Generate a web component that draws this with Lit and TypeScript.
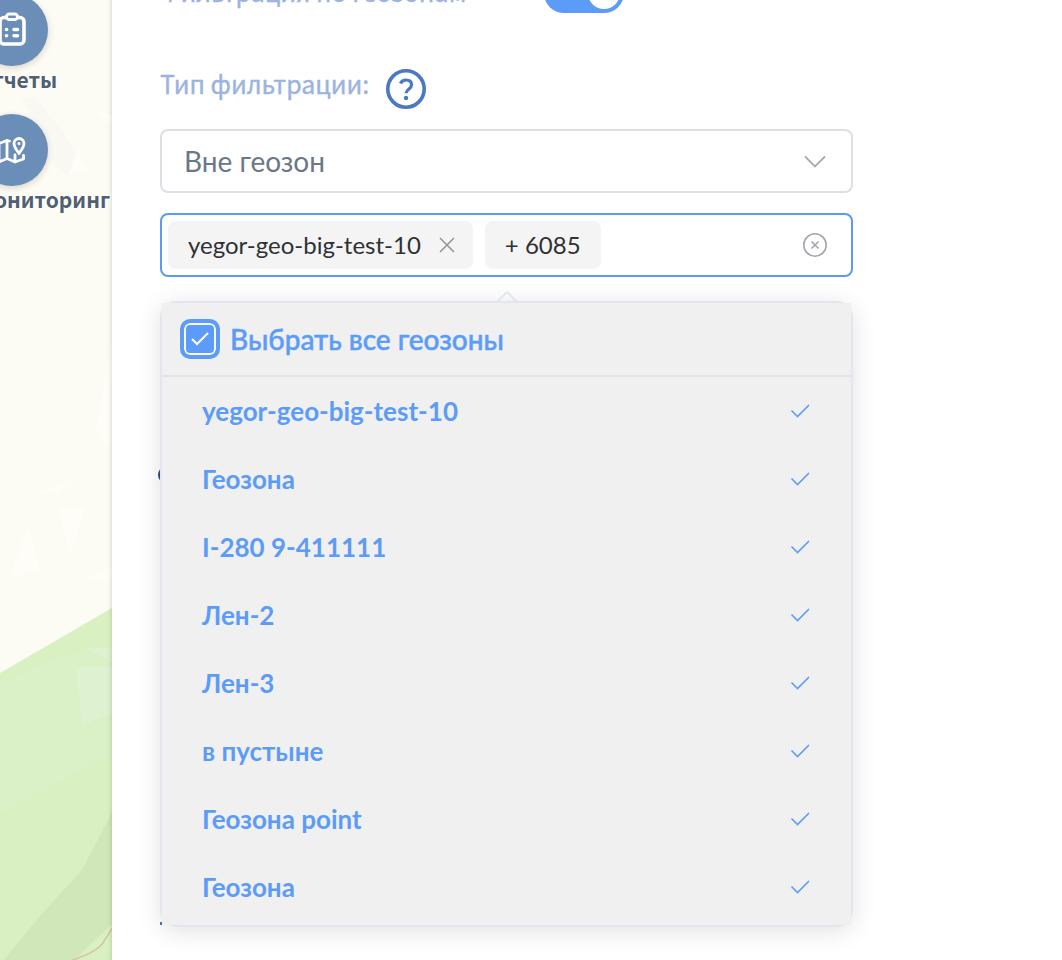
import { LitElement, html, css } from "lit";
import { customElement, state } from "lit/decorators.js";

@customElement("map-sidebar")
class MapSidebar extends LitElement {
  static styles = css`
    :host {
      display: block;
      position: relative;
      overflow: hidden;
      background: #fcfbf4;
    }
    .map {
      position: absolute;
      inset: 0;
      width: 100%;
      height: 100%;
    }
    .edge {
      position: absolute;
      inset: 0;
      box-shadow: inset -4px 0 4px -3px rgba(0, 0, 0, 0.14);
    }
    nav {
      position: relative;
      display: flex;
      flex-direction: column;
      gap: 22px;
      margin: -6px 0 0 -24px;
    }
    a {
      display: flex;
      flex-direction: column;
      align-items: flex-start;
      color: #505f72;
      font: 700 21px/26px "Noto Sans CJK SC", "Noto Sans", sans-serif;
      white-space: nowrap;
      text-decoration: none;
    }
    .disc {
      width: 72px;
      height: 72px;
      border-radius: 50%;
      background: #6a8eb7;
      box-shadow: 0 2px 6px rgba(60, 50, 30, 0.2);
    }
    .disc svg {
      display: block;
    }
    .label {
      text-shadow: 0 0 4px #fff, 0 0 4px #fff;
    }
  `;

  render() {
    return html`
      <svg class="map" viewBox="0 0 112 960" preserveAspectRatio="xMinYMin slice" aria-hidden="true">
        <path d="M22 100L70 180l-8-50-28-34zM50 160l18 16 8-22-14-24z" fill="#f9f8f2" />
        <path d="M67 176l10-23 12 17zM95 110l17 15v-10zM96 430l8-44 8-40v96l-7 2z" fill="#fefdf8" />
        <path d="M9 577l20-54 11 49zM35 493l39-12-16 12zM59 508h26l-15 50zM86 578l26-11v15z" fill="#fefdf8" />
        <path d="M0 673l112-65v352H0z" fill="#d9f1c2" />
        <path d="M0 684l60-28 52-10v106L0 814z" fill="#dbf0c8" opacity=".6" />
        <path d="M76 667h36v47l-30 11zM86 648h26v14z" fill="#def1d0" />
        <path d="M112 812L82 870 40 916 4 960h70l38-36z" fill="#d0e8b9" />
        <path d="M70 961q30-10 34-20l9-14" fill="none" stroke="#cfc6a0" stroke-width="1.5" />
      </svg>
      <div class="edge"></div>
      <nav>
        <a href="#reports">
          <span class="disc">
            <svg width="72" height="72" viewBox="0 0 72 72" fill="none" stroke="#fff" stroke-width="3.600" stroke-linejoin="round" stroke-linecap="round">
              <path d="M30 23.500h-2a4 4 0 0 0-4 4V46a4 4 0 0 0 4 4h16a4 4 0 0 0 4-4V27.500a4 4 0 0 0-4-4h-2" />
              <rect x="30.500" y="20" width="11" height="5.500" rx="2.750" stroke-width="3" />
              <path d="M30.500 35.500h.1M38 35.500h3.500M30.500 41.800h.1M38 41.800h3.500" />
            </svg>
          </span>
          <span class="label">Отчеты</span>
        </a>
        <a href="#monitoring">
          <span class="disc">
            <svg width="72" height="72" viewBox="0 0 72 72" fill="none" stroke="#fff" stroke-width="2.800" stroke-linejoin="round" stroke-linecap="round">
              <path d="M33.500 27L31 26.500l-8 3V48l8-3.500 8 3.500 8.500-3V41.500M31 26.500v18M39 41v7" />
              <path d="M43 39.500c-2.800-4-5-6.600-5-10a5 5 0 0 1 10 0c0 3.400-2.200 6-5 10z" />
              <circle cx="43" cy="29.500" r=".8" stroke-width="1.500" />
            </svg>
          </span>
          <span class="label">Мониторинг</span>
        </a>
      </nav>
    `;
  }
}

@customElement("zone-picker")
class ZonePicker extends LitElement {
  static styles = css`
    :host {
      display: block;
      position: relative;
      font: 400 26px/32px Lato, sans-serif;
    }
    * {
      box-sizing: border-box;
    }
    button {
      border: 0;
      padding: 0;
      background: none;
      font: inherit;
      color: inherit;
      cursor: pointer;
    }
    svg {
      display: block;
      flex: none;
    }
    .field {
      display: flex;
      align-items: center;
      gap: 12px;
      height: 64px;
      padding: 0 22px 0 6px;
      border: 2px solid #5c9af2;
      border-radius: 8px;
      background: #fff;
    }
    .chip {
      display: flex;
      align-items: center;
      gap: 16px;
      height: 48px;
      padding: 0 16px 0 20px;
      border-radius: 8px;
      background: #f4f4f5;
      color: #303133;
      font-size: 24px;
      white-space: nowrap;
    }
    .chip.more {
      padding-right: 20px;
    }
    .search {
      flex: 1;
      min-width: 0;
      border: 0;
      outline: 0;
      background: none;
      font: inherit;
    }
    .menu {
      position: absolute;
      top: 88px;
      left: 0;
      right: 0;
      border: 2px solid #e4e6ee;
      border-radius: 16px;
      box-shadow: 0 4px 24px rgba(0, 0, 0, 0.12);
    }
    .arrow {
      position: absolute;
      top: -12px;
      left: 50%;
      margin-left: -12px;
    }
    .body {
      padding-bottom: 4px;
      background: #f0f0f0;
      color: #5c9cf8;
    }
    .all {
      display: flex;
      align-items: center;
      gap: 10px;
      height: 74px;
      padding: 0 18px;
      border-bottom: 2px solid #e2e4ea;
      font-size: 28px;
      font-weight: 500;
      -webkit-text-stroke: 0.5px #5c9cf8;
    }
    .tick {
      position: relative;
      display: grid;
      place-items: center;
      width: 40px;
      height: 40px;
    }
    .tick input {
      appearance: none;
      grid-area: 1 / 1;
      width: 40px;
      height: 40px;
      margin: 0;
      border: 4px solid #5c9cf8;
      border-radius: 10px;
      background: #5c9cf8;
      box-shadow: inset 0 0 0 2px #f6f9ff;
    }
    .tick svg {
      grid-area: 1 / 1;
      z-index: 1;
      pointer-events: none;
    }
    .list {
      margin: 0;
      padding: 0;
      list-style: none;
    }
    .option {
      display: flex;
      align-items: center;
      justify-content: space-between;
      height: 68px;
      padding: 0 40px;
      font-weight: 700;
    }
  `;

  @state() zones = [
    "yegor-geo-big-test-10",
    "Геозона",
    "I-280 9-411111",
    "Лен-2",
    "Лен-3",
    "в пустыне",
    "Геозона point",
    "Геозона",
  ];

  render() {
    return html`
      <div class="field">
        <span class="chip">
          ${this.zones[0]}
          <button type="button" aria-label="Удалить">
            <svg width="20" height="20" viewBox="0 0 20 20" stroke="#909399" stroke-width="1.500">
              <path d="M3 3l14 14M17 3L3 17" />
            </svg>
          </button>
        </span>
        <span class="chip more">+ 6085</span>
        <input class="search" type="text" aria-label="Геозоны" />
        <button type="button" aria-label="Очистить">
          <svg width="28" height="28" viewBox="0 0 28 28" fill="none" stroke="#a3a6ab" stroke-width="1.600">
            <circle cx="14" cy="14" r="11.200" />
            <path d="M10.500 10.500l7 7M17.500 10.500l-7 7" />
          </svg>
        </button>
      </div>
      <div class="menu">
        <svg class="arrow" width="24" height="12" viewBox="0 0 24 12" fill="none" stroke="#e4e6ee" stroke-width="2">
          <path d="M1 12L11 2q1-1 2 0l10 10" />
        </svg>
        <div class="body">
          <label class="all">
            <span class="tick">
              <input type="checkbox" checked />
              <svg width="20" height="16" viewBox="0 0 20 16" fill="none" stroke="#fff" stroke-width="2">
                <path d="M2 8l5 5L18 2" />
              </svg>
            </span>
            Выбрать все геозоны
          </label>
          <ul class="list" role="listbox" aria-multiselectable="true" aria-label="Геозоны">
            ${this.zones.map(
              (zone) => html`
                <li class="option" role="option" aria-selected="true">
                  ${zone}
                  <svg width="24" height="20" viewBox="0 0 24 20" fill="none" stroke="#5c9cf8" stroke-width="1.600">
                    <path d="M4.500 9.500l6 6L22 4" />
                  </svg>
                </li>
              `
            )}
          </ul>
        </div>
      </div>
    `;
  }
}

@customElement("app-root")
class AppRoot extends LitElement {
  static styles = css`
    :host {
      display: grid;
      grid-template-columns: 112px minmax(0, 1fr);
      height: 100vh;
      overflow: hidden;
      background: #fff;
    }
    * {
      box-sizing: border-box;
    }
    main {
      display: flex;
      flex-direction: column;
      overflow: hidden;
      padding: 0 209px 0 48px;
      color: #9bb3e0;
      font: 400 25px/36px "Noto Sans CJK SC", "Noto Sans", sans-serif;
    }
    label {
      -webkit-text-stroke: 0.4px #9bb3e0;
    }
    .toggle-row {
      display: grid;
      grid-template-columns: 384px auto;
      justify-content: start;
      margin-top: -27px;
    }
    .switch {
      appearance: none;
      width: 80px;
      height: 40px;
      margin: 0;
      border-radius: 20px;
      background: radial-gradient(circle at 60px 20px, #fff 15.500px, #5c9cf8 16.500px);
    }
    .type-row {
      display: flex;
      gap: 17px;
      margin: 52px 0 20px;
    }
    .help {
      display: block;
      margin-top: 4px;
      border: 0;
      padding: 0;
      background: none;
    }
    .help svg {
      display: block;
    }
    .select {
      display: grid;
      align-items: center;
      margin-bottom: 20px;
    }
    .select select {
      appearance: none;
      grid-area: 1 / 1;
      width: 100%;
      height: 64px;
      padding: 0 22px;
      border: 2px solid #dcdfe4;
      border-radius: 8px;
      background: #fff;
      color: #6b7785;
      font: 400 28px/40px Lato, sans-serif;
    }
    .select svg {
      grid-area: 1 / 1;
      justify-self: end;
      margin-right: 26px;
      pointer-events: none;
    }
    .below {
      display: flex;
      flex-direction: column;
      gap: 439px;
      margin: 190px 0 0 -2px;
    }
    .bullet {
      width: 16px;
      height: 16px;
      border-radius: 50%;
      background: #2d4a7c;
    }
    .line {
      width: 3px;
      height: 3px;
      margin-left: 2px;
      background: #4d76b8;
    }
    zone-picker {
      z-index: 1;
    }
  `;

  render() {
    return html`
      <map-sidebar></map-sidebar>
      <main>
        <div class="toggle-row">
          <label for="by-zone">Фильтрация по геозонам</label>
          <input id="by-zone" class="switch" type="checkbox" role="switch" checked />
        </div>
        <div class="type-row">
          <label for="type">Тип фильтрации:</label>
          <button class="help" type="button" aria-label="Справка">
            <svg width="40" height="40" viewBox="0 0 40 40" fill="none" stroke="#4a78c2" stroke-width="3.600">
              <circle cx="20" cy="20" r="18.200" />
              <path d="M14.500 14.500q1.500-3.500 5.500-3.500 5.500 0 5.500 4.700 0 2.300-2.500 4.300-2.900 2.200-2.900 4.300" stroke-width="3.200" />
              <circle cx="20" cy="29" r="2.200" fill="#4a78c2" stroke="none" />
            </svg>
          </button>
        </div>
        <div class="select">
          <select id="type">
            <option>Вне геозон</option>
          </select>
          <svg width="24" height="16" viewBox="0 0 24 16" fill="none" stroke="#a8abb2" stroke-width="1.800" stroke-linecap="round">
            <path d="M2.500 4L12 13.500 21.500 4" />
          </svg>
        </div>
        <zone-picker></zone-picker>
        <div class="below">
          <div class="bullet"></div>
          <div class="line"></div>
        </div>
      </main>
    `;
  }
}
